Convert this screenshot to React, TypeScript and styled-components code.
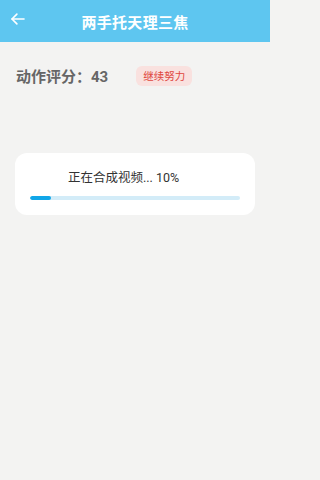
import { FC } from "react";
import styled, { createGlobalStyle } from "styled-components";

const GlobalStyle = createGlobalStyle`
  html, body {
    margin: 0;
    padding: 0;
    background: #f3f3f2;
    font-family: Roboto, "Noto Sans CJK SC", sans-serif;
  }
  * { box-sizing: border-box; }
`;

const Page = styled.div`
  width: 270px;
  min-height: 480px;
  background: #f3f3f2;
`;

const Header = styled.header`
  height: 42px;
  background: #5ec6f0;
  display: flex;
  align-items: center;
  justify-content: center;
  position: relative;
`;

const BackButton = styled.button`
  position: absolute;
  left: 9px;
  top: 10px;
  width: 18px;
  height: 18px;
  padding: 0;
  border: 0;
  background: none;
  display: flex;
  align-items: center;
  justify-content: center;
`;

const Title = styled.h1`
  margin: 0;
  font-size: 15px;
  font-weight: 700;
  color: #ffffff;
  letter-spacing: 0.3px;
`;

const ScoreRow = styled.div`
  display: flex;
  align-items: center;
  gap: 28px;
  padding: 15px 16px 0;
  height: 52px;
`;

const Score = styled.span`
  font-size: 15px;
  font-weight: 700;
  color: #666666;
`;

const Badge = styled.span<{ $tone: string; $bg: string }>`
  height: 20px;
  padding: 0 7px;
  border-radius: 6px;
  background: ${(p) => p.$bg};
  color: ${(p) => p.$tone};
  font-size: 10.5px;
  display: flex;
  align-items: center;
`;

const Card = styled.div`
  margin: 59px 15px 0;
  height: 62px;
  background: #ffffff;
  border-radius: 12px;
  padding: 16px 15px 0;
`;

const Status = styled.div`
  font-size: 12.5px;
  color: #333333;
  padding-left: 38px;
  line-height: 18px;
`;

const Track = styled.div`
  margin-top: 9px;
  height: 4px;
  border-radius: 2px;
  background: #d3ecf8;
  overflow: hidden;
`;

const Fill = styled.div`
  height: 100%;
  border-radius: 2px;
  background: #10a6e8;
`;

const progress = 10;

const App: FC = () => (
  <Page>
    <GlobalStyle />
    <Header>
      <BackButton aria-label="返回">
        <svg width="18" height="18" viewBox="0 0 24 24" fill="none" stroke="#fff" strokeWidth="2.2" strokeLinecap="round" strokeLinejoin="round">
          <path d="M20 12H4" />
          <path d="M10.5 5.5L4 12l6.5 6.5" />
        </svg>
      </BackButton>
      <Title>两手托天理三焦</Title>
    </Header>
    <ScoreRow>
      <Score>动作评分：43</Score>
      <Badge $tone="#e0463e" $bg="#f9e1df">继续努力</Badge>
    </ScoreRow>
    <Card>
      <Status>正在合成视频... {progress}%</Status>
      <Track>
        <Fill style={{ width: `${progress}%` }} />
      </Track>
    </Card>
  </Page>
);

export default App;
